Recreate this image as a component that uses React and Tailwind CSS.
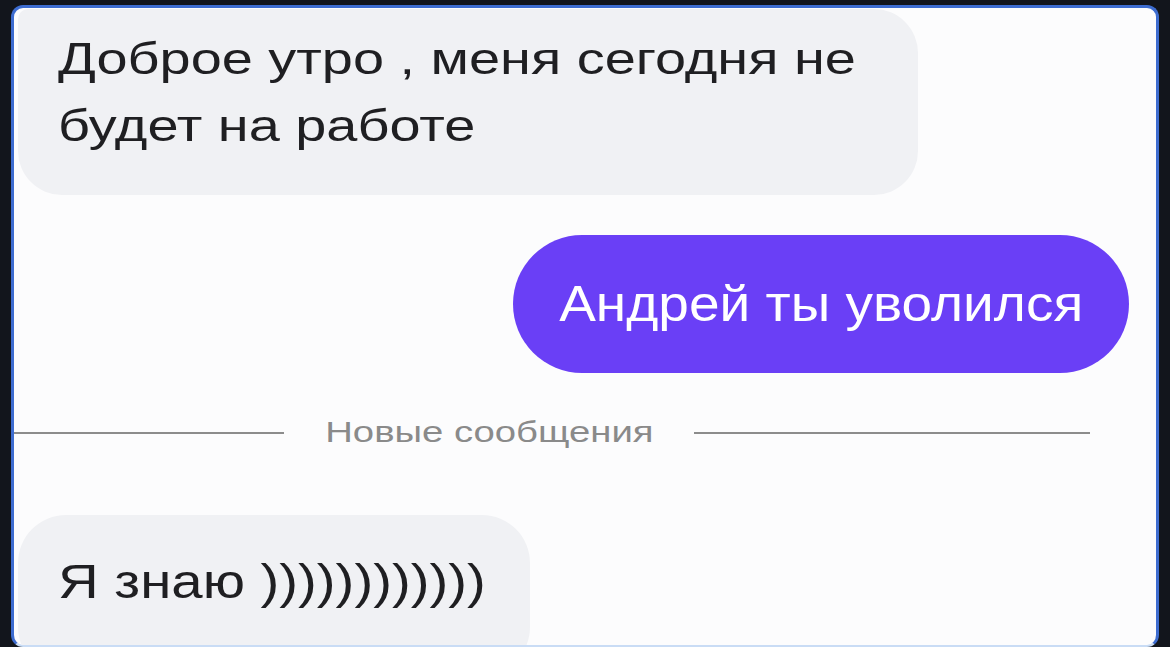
export default function App() {
  return (
    <div className="w-[1170px] h-[647px] overflow-hidden bg-[#12151c] px-[11px] pt-[5px] font-['Liberation_Sans',Arial,sans-serif]">
      <div className="h-[642px] overflow-hidden rounded-[12px] border-[3px] border-b-[2px] border-[#3d6cd0] border-b-[#c9dcf5] bg-[#fcfcfd]">
        {/* incoming message */}
        <div className="ml-[4px] mt-[1px] w-[900px] h-[186px] rounded-[44px] rounded-tl-[10px] bg-[#f0f1f4] pl-[40px] pt-[16px] text-[44px] leading-[67px] text-[#1f1f22]">
          <div className="origin-left scale-x-[1.27] whitespace-nowrap">Доброе утро , меня сегодня не</div>
          <div className="origin-left scale-x-[1.27] whitespace-nowrap">будет на работе</div>
        </div>

        {/* outgoing message */}
        <div className="mt-[40px] mr-[27px] flex justify-end">
          <div className="flex h-[138px] w-[616px] items-center justify-center rounded-full bg-[#6a3ff6] text-[50px] text-white">
            <span className="scale-x-[1.1] whitespace-nowrap">Андрей ты уволился</span>
          </div>
        </div>

        {/* divider */}
        <div className="mt-[38px] flex items-center">
          <div className="h-[2px] w-[270px] bg-[#8c8c8c]" />
          <div className="flex w-[410px] justify-center text-[29px] text-[#8a8a8a]">
            <span className="scale-x-[1.32] whitespace-nowrap">Новые сообщения</span>
          </div>
          <div className="h-[2px] w-[396px] bg-[#8c8c8c]" />
        </div>

        {/* incoming reply */}
        <div className="ml-[4px] mt-[60px] w-[512px] h-[160px] rounded-[48px] bg-[#f0f1f4] pl-[40px] pt-[36px] text-[49px] leading-[60px] text-[#1f1f22]">
          <div className="origin-left scale-x-[1.15] whitespace-nowrap">Я знаю ))))))))))))</div>
        </div>
      </div>
    </div>
  )
}
